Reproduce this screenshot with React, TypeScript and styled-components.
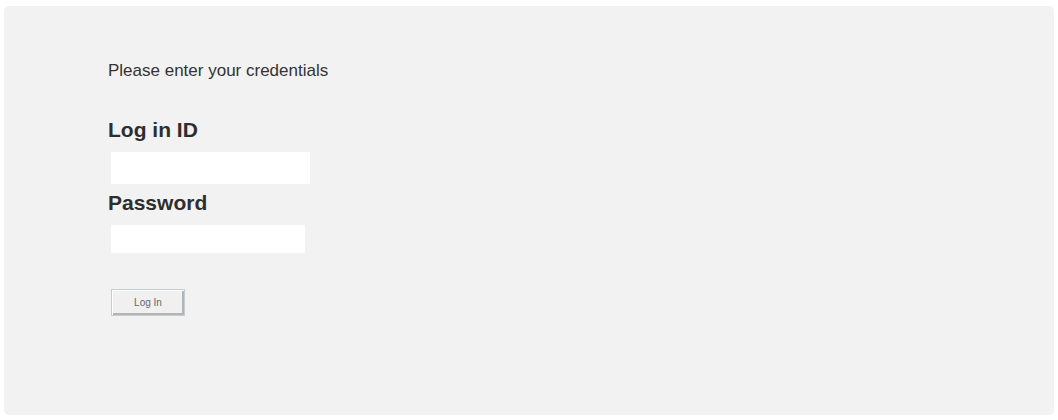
import React from "react";
import styled, { createGlobalStyle } from "styled-components";

const Global = createGlobalStyle`
  html, body { margin: 0; padding: 0; background: #ffffff; }
  body { font-family: "Liberation Sans", Arial, Helvetica, sans-serif; }
`;

const Page = styled.div`
  padding: 6px 4px 5px 4px;
`;

const Panel = styled.div`
  background: #f2f2f2;
  border-radius: 5px;
  height: 409px;
  box-sizing: border-box;
  padding: 55px 0 0 104px;
  display: flex;
  flex-direction: column;
  align-items: flex-start;
  color: #333333;
`;

const Intro = styled.p`
  margin: 0 0 37px 0;
  font-size: 17px;
  line-height: 19.5px;
`;

const Label = styled.label<{ $gap: number }>`
  display: block;
  font-size: 21px;
  font-weight: bold;
  line-height: 24px;
  margin: 0 0 ${(p) => p.$gap}px 0;
  color: #2e2e2e;
`;

const Field = styled.input<{ $w: number; $h: number; $after: number }>`
  display: block;
  box-sizing: border-box;
  width: ${(p) => p.$w}px;
  height: ${(p) => p.$h}px;
  margin: 0 0 ${(p) => p.$after}px 3px;
  border: none;
  outline: none;
  background: #ffffff;
  padding: 0 4px;
  font-family: "Liberation Sans", Arial, sans-serif;
  font-size: 14px;
`;

const Button = styled.button`
  box-sizing: border-box;
  width: 74px;
  height: 27px;
  margin-left: 3px;
  padding: 0;
  background: #f0f0f0;
  border: 1px solid #c6ccd6;
  box-shadow: inset 1px 1px 0 #ffffff, inset -2px -2px 0 #b4b4b4;
  font-family: "Liberation Sans", Arial, sans-serif;
  font-size: 10px;
  color: #666666;
  cursor: pointer;
`;

export default function App() {
  return (
    <>
      <Global />
      <Page>
        <Panel>
          <Intro>Please enter your credentials</Intro>
          <Label htmlFor="loginid" $gap={10}>Log in ID</Label>
          <Field id="loginid" type="text" $w={199} $h={32} $after={7} />
          <Label htmlFor="password" $gap={10}>Password</Label>
          <Field id="password" type="password" $w={194} $h={28} $after={36} />
          <Button type="button">Log In</Button>
        </Panel>
      </Page>
    </>
  );
}
